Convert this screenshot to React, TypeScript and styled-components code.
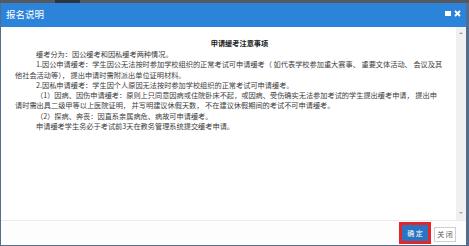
import styled, { createGlobalStyle } from "styled-components";

const GlobalStyle = createGlobalStyle`
  html, body {
    margin: 0;
    padding: 0;
    background: #536d8e;
  }
  body {
    font-family: "Noto Sans CJK SC", "Noto Sans", sans-serif;
  }
`;

const paragraphs: string[][] = [
  ["缓考分为：因公缓考和因私缓考两种情况。"],
  [
    "1.因公申请缓考：学生因公无法按时参加学校组织的正常考试可申请缓考（ 如代表学校参加重大赛事、 重要文体活动、 会议及其",
    "他社会活动等）， 提出申请时需附派出单位证明材料。",
  ],
  ["2.因私申请缓考：学生因个人原因无法按时参加学校组织的正常考试可申请缓考。"],
  [
    "（1）因病、因伤申请缓考：原则上只同意因病或住院卧床不起，或因病、受伤确实无法参加考试的学生提出缓考申请， 提出申",
    "请时需出具二级甲等以上医院证明， 并写明建议休假天数， 不在建议休假期间的考试不可申请缓考。",
  ],
  ["（2）探病、奔丧：因直系亲属病危、病故可申请缓考。"],
  ["申请缓考学生务必于考试前3天在教务管理系统提交缓考申请。"],
];

const App = () => {
  return (
    <Screen>
      <GlobalStyle />
      <TopStrip>
        <TopTab />
      </TopStrip>
      <Window>
        <TitleBar>
          <TitleText>报名说明</TitleText>
          <TitleTools>
            <svg width="6" height="5" viewBox="0 0 6 5">
              <rect x="0" y="0" width="6" height="5" fill="#fff" />
            </svg>
            <svg width="7" height="7" viewBox="0 0 7 7">
              <path d="M1 1 L6 6 M6 1 L1 6" stroke="#fff" strokeWidth="1.8" />
            </svg>
          </TitleTools>
        </TitleBar>
        <Body>
          <Content>
            <Heading>申请缓考注意事项</Heading>
            {paragraphs.map((lines, i) => (
              <Para key={i}>
                {lines.map((line, j) => (
                  <span key={j}>
                    {j > 0 && <br />}
                    {line}
                  </span>
                ))}
              </Para>
            ))}
          </Content>
          <ScrollBar>
            <Arrow $dir="up" />
            <Arrow $dir="down" />
          </ScrollBar>
        </Body>
        <Footer>
          <OkButton>确 定</OkButton>
          <CloseButton>关 闭</CloseButton>
        </Footer>
      </Window>
    </Screen>
  );
};

const Screen = styled.div`
  width: 469px;
  height: 246px;
  display: flex;
  flex-direction: column;
  overflow: hidden;
`;

const TopStrip = styled.div`
  height: 3px;
  background: #55585c;
  display: flex;
`;

const TopTab = styled.div`
  width: 25px;
  margin-left: 55px;
  background: #2b3440;
`;

const Window = styled.div`
  width: 465px;
  height: 242px;
  margin-left: 1px;
  display: flex;
  flex-direction: column;
  background: #fff;
`;

const TitleBar = styled.div`
  height: 24px;
  background: #2c84da;
  display: flex;
  align-items: center;
  justify-content: space-between;
  padding: 0 5px 0 5px;
`;

const TitleText = styled.div`
  color: #fff;
  font-size: 9.5px;
  line-height: 1;
  margin-top: -1px;
`;

const TitleTools = styled.div`
  display: flex;
  align-items: center;
  gap: 3px;
  margin-top: -3px;

  svg {
    display: block;
  }
`;

const Body = styled.div`
  flex: 1;
  display: flex;
  min-height: 0;
`;

const Content = styled.div`
  flex: 1;
  padding: 11px 0 0 14px;
  color: #3c3c3c;
  font-size: 7.2px;
  line-height: 10.3px;
`;

const Heading = styled.div`
  font-weight: bold;
  color: #222;
  text-align: center;
  padding-left: 8px;
  margin-bottom: 1px;
  line-height: 10px;
`;

const Para = styled.p`
  margin: 0;
  text-indent: 21px;
  white-space: pre;
`;

const ScrollBar = styled.div`
  width: 10px;
  background: #f0f0f0;
  display: flex;
  flex-direction: column;
  justify-content: space-between;
  align-items: center;
  padding: 5px 0 6px;
`;

const Arrow = styled.div<{ $dir: "up" | "down" }>`
  width: 0;
  height: 0;
  border-left: 2px solid transparent;
  border-right: 2px solid transparent;
  ${(p) =>
    p.$dir === "up"
      ? "border-bottom: 2px solid #a3a3a3;"
      : "border-top: 2px solid #a3a3a3;"}
`;

const Footer = styled.div`
  height: 24px;
  border-top: 1px solid #ececec;
  background: #fdfdfd;
  display: flex;
  justify-content: flex-end;
  align-items: center;
  gap: 3px;
  padding-right: 10px;
`;

const OkButton = styled.button`
  width: 32px;
  height: 22px;
  padding: 0;
  border: 3px solid #e3262c;
  background: #2b74c2;
  color: #fff;
  font-family: "Noto Sans CJK SC", sans-serif;
  font-size: 7px;
  line-height: 1;
`;

const CloseButton = styled.button`
  width: 22px;
  height: 15px;
  padding: 0;
  margin-top: 2px;
  border: 1px solid #cfcfcf;
  background: #fff;
  color: #555;
  font-family: "Noto Sans CJK SC", sans-serif;
  font-size: 7px;
  line-height: 1;
`;

export default App;
